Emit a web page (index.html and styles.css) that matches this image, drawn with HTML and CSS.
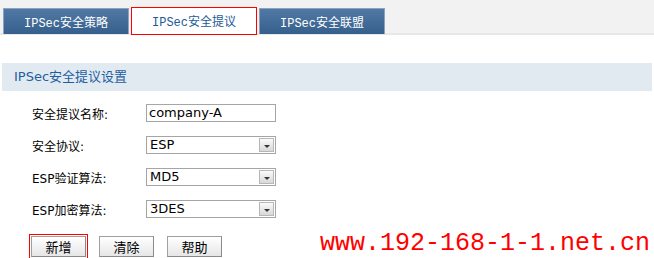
FILE: index.html
```html
<!DOCTYPE html>
<html lang="zh-CN">
  <head>
    <meta charset="UTF-8" />
    <title>IPSec安全提议</title>
    <link rel="stylesheet" href="styles.css">
  </head>
  <body>
    <div class="tab-bar">
      <div class="tab">IPSec安全策略</div>
      <div class="tab active">IPSec安全提议</div>
      <div class="tab">IPSec安全联盟</div>
    </div>

    <div class="panel-title">IPSec安全提议设置</div>

    <div class="form">
      <div class="row">
        <div class="label">安全提议名称:</div>
        <div class="input">company-A</div>
      </div>
      <div class="row">
        <div class="label">安全协议:</div>
        <div class="select"><span class="value">ESP</span><span class="arrow"></span></div>
      </div>
      <div class="row">
        <div class="label">ESP验证算法:</div>
        <div class="select"><span class="value">MD5</span><span class="arrow"></span></div>
      </div>
      <div class="row">
        <div class="label">ESP加密算法:</div>
        <div class="select"><span class="value">3DES</span><span class="arrow"></span></div>
      </div>
    </div>

    <div class="buttons">
      <button class="btn focused">新增</button>
      <button class="btn">清除</button>
      <button class="btn">帮助</button>
    </div>

    <div class="watermark">www.192-168-1-1.net.cn</div>
  </body>
</html>
```

FILE: styles.css
```css
body {
  margin: 0;
  padding: 0;
  background: white;
  font-family: "DejaVu Sans", "Noto Sans CJK SC", sans-serif;
  font-size: 12px;
  color: #000;
  position: relative;
  height: 258px;
  overflow: hidden;
}
.tab-bar {
  height: 33px;
  background: #f2f2f2;
  border-bottom: 2px solid #e8e8e8;
  display: flex;
  align-items: flex-end;
  padding-left: 3px;
  gap: 2px;
}
.tab {
  width: 126px;
  height: 26px;
  margin-bottom: -1px;
  box-sizing: border-box;
  display: flex;
  align-items: center;
  justify-content: center;
  font-family: "Liberation Mono", "Noto Sans CJK SC", monospace;
  font-size: 12px;
  color: white;
  background: linear-gradient(#5179a6, #375f8b);
  border: 1px solid #8aa4c0;
  border-bottom: none;
}
.tab.active {
  height: 28px;
  margin-bottom: -2px;
  background: white;
  color: #1d5a96;
  border: 1px solid #f00;
}
.panel-title {
  margin: 28px 2px 0;
  height: 28px;
  line-height: 28px;
  padding-left: 12px;
  background: #e2eaf1;
  color: #1f5fa0;
  font-family: "DejaVu Sans", "Noto Sans CJK SC", sans-serif;
  font-size: 13px;
}
.form {
  margin-top: 13px;
  padding-left: 32px;
  display: flex;
  flex-direction: column;
  gap: 14px;
}
.row {
  display: flex;
  align-items: center;
  height: 18px;
}
.label {
  width: 114px;
  font-size: 12px;
}
.input, .select {
  width: 130px;
  height: 18px;
  box-sizing: border-box;
  border: 1px solid #a5a5a5;
  font-size: 13px;
  line-height: 16px;
  padding-left: 2px;
}
.select {
  display: flex;
  align-items: center;
  justify-content: space-between;
  padding-left: 3px;
  padding-right: 1px;
}
.arrow {
  width: 15px;
  height: 14px;
  box-sizing: border-box;
  border: 1px solid #b7b7b7;
  background: linear-gradient(#fafafa, #d8d8d8);
  display: flex;
  align-items: center;
  justify-content: center;
}
.arrow::after {
  content: "";
  border-left: 3px solid transparent;
  border-right: 3px solid transparent;
  border-top: 3px solid #333;
  margin-top: 2px;
}
.buttons {
  margin-top: 18px;
  padding-left: 31px;
  display: flex;
  gap: 13px;
}
.btn {
  width: 55px;
  height: 21px;
  padding: 0;
  font-family: "DejaVu Sans", "Noto Sans CJK SC", sans-serif;
  font-size: 13px;
  color: #000;
  background: linear-gradient(#ffffff, #e6e6e6);
  border: 1px solid #a0a0a0;
  border-right-color: #8a8a8a;
  border-bottom-color: #8a8a8a;
}
.btn.focused {
  outline: 1px solid #f00;
  outline-offset: 1px;
}
.watermark {
  position: absolute;
  left: 320px;
  top: 229px;
  font-family: "Liberation Mono", monospace;
  font-size: 25px;
  color: #f00;
  letter-spacing: 0;
}
```
